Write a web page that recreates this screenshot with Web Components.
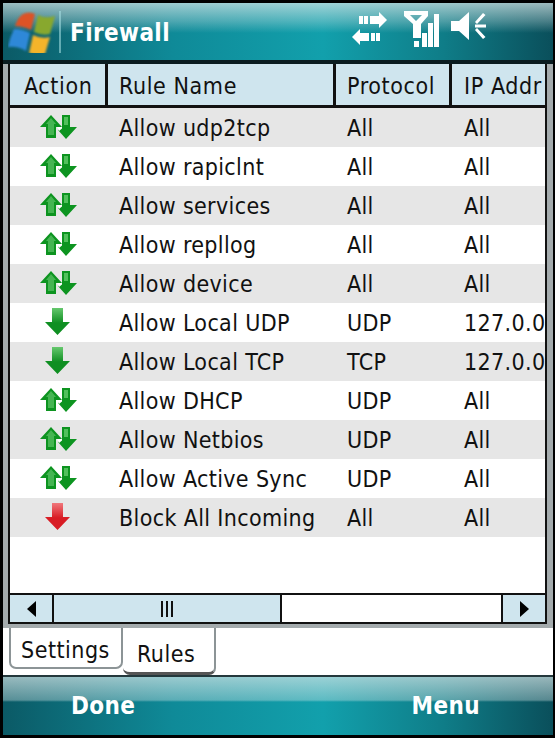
<!DOCTYPE html>
<html>
<head>
<meta charset="utf-8">
<title>Firewall</title>
<style>
  html, body { margin: 0; padding: 0; background: #000; }
  body { width: 555px; height: 738px; overflow: hidden; font-family: "DejaVu Sans Condensed", "DejaVu Sans", sans-serif; }
</style>
</head>
<body>
<fw-screen>
  <fw-titlebar slot="top">Firewall</fw-titlebar>
  <fw-rules></fw-rules>
  <fw-tabs>
    <fw-tab>Settings</fw-tab>
    <fw-tab active>Rules</fw-tab>
  </fw-tabs>
  <fw-softkeys slot="bottom">
    <span slot="left">Done</span>
    <span slot="right">Menu</span>
  </fw-softkeys>
</fw-screen>

<script>
const UI_FONT = '"DejaVu Sans Condensed", "DejaVu Sans", sans-serif';
const RULES = [
  ['both', 'Allow udp2tcp', 'All', 'All'],
  ['both', 'Allow rapiclnt', 'All', 'All'],
  ['both', 'Allow services', 'All', 'All'],
  ['both', 'Allow repllog', 'All', 'All'],
  ['both', 'Allow device', 'All', 'All'],
  ['in', 'Allow Local UDP', 'UDP', '127.0.0.1'],
  ['in', 'Allow Local TCP', 'TCP', '127.0.0.1'],
  ['both', 'Allow DHCP', 'UDP', 'All'],
  ['both', 'Allow Netbios', 'UDP', 'All'],
  ['both', 'Allow Active Sync', 'UDP', 'All'],
  ['block', 'Block All Incoming', 'All', 'All'],
];

class FwScreen extends HTMLElement {
  constructor() {
    super();
    this.attachShadow({ mode: 'open' }).innerHTML = `
<style>
  :host {
    display: flex;
    flex-direction: column;
    box-sizing: border-box;
    width: 555px;
    height: 738px;
    padding: 3px 2px 3px 3px;
    background: #000;
  }
  #middle { flex: 1; display: flex; flex-direction: column; min-height: 0; background: #fff; }
</style>
<slot name="top"></slot>
<div id="middle"><slot></slot></div>
<slot name="bottom"></slot>`;
  }
}
customElements.define('fw-screen', FwScreen);

class FwTitlebar extends HTMLElement {
  constructor() {
    super();
    this.attachShadow({ mode: 'open' }).innerHTML = `
<style>
  :host {
    display: flex;
    flex: none;
    align-items: center;
    box-sizing: border-box;
    height: 61px;
    color: #fff;
    font: bold 24px ${UI_FONT};
    letter-spacing: .4px;
    border-bottom: 4px solid #0a1c20;
    background:
      linear-gradient(180deg, rgba(225,235,235,.68) 0, rgba(225,235,235,.3) 18px, rgba(225,235,235,0) 30px),
      linear-gradient(90deg, #0b5a66 0, #0f8a98 170px, #12a0ac 320px, #0f7d88 440px, #0a4f5b 100%);
  }
  #logo { width: 48px; height: 42px; margin-left: 5px; flex: none; }
  #sep { width: 2px; height: 42px; margin: 0 9px 0 3px; background: rgba(170,225,230,.55); flex: none; }
  #name { flex: 1; padding-top: 2px; }
  #status { display: flex; align-items: flex-start; margin-right: 66px; height: 38px; }
  #status svg { display: block; flex: none; }
</style>
<svg id="logo" viewBox="0 0 48 42">
  <defs><filter id="b"><feGaussianBlur stdDeviation=".8"/></filter></defs>
  <g filter="url(#b)">
    <path d="M7 15Q10 6 15 3Q21 0 27 3L23 19Q15 15 7 15Z" fill="#dc5226"/>
    <path d="M30 4Q37 8 47 5L42 23Q34 25 26 21Z" fill="#88a82e"/>
    <path d="M6 18Q14 18 22 22L18 40Q10 35 0 36Q2 26 6 18Z" fill="#2e88d8"/>
    <path d="M25 24Q33 28 42 26L37 43Q30 46 21 42Z" fill="#f4b42c"/>
  </g>
</svg>
<div id="sep"></div>
<div id="name"><slot></slot></div>
<div id="status">
  <svg width="36" height="33" viewBox="0 0 36 33" fill="#fff" style="margin-top:-1px">
    <path d="M27 0L35 8L27 16V12H18V4H27ZM7 4H11V12H7ZM12 4H16V12H12Z"/>
    <path d="M8 17V21H17V29H8V33L0 25ZM19 21H23V29H19ZM24 21H28V29H24Z"/>
  </svg>
  <svg width="36" height="37" viewBox="0 0 36 37" fill="#fff" style="margin:-2px 0 0 16px">
    <path fill-rule="evenodd" d="M0 0H24V5L17 13V27H9V13L0 5ZM6 4L12 10L18 4Z"/>
    <rect x="10" y="30" width="5" height="6"/>
    <rect x="18" y="22" width="5" height="14"/>
    <rect x="24" y="12" width="5" height="24"/>
    <rect x="30" y="3" width="5" height="33"/>
  </svg>
  <svg width="36" height="29" viewBox="0 0 36 29" fill="#fff" style="margin:-1px 0 0 11px">
    <path d="M0 9H8L18 0V28L8 19H0Z"/>
    <path d="M24 12.5H35V15.5H24ZM24 10L32 1L34.500 3L26 12ZM24 18L26 16L34.500 25L32 27Z"/>
  </svg>
</div>`;
  }
}
customElements.define('fw-titlebar', FwTitlebar);

class FwAction extends HTMLElement {
  static get observedAttributes() { return ['kind']; }
  constructor() {
    super();
    this.attachShadow({ mode: 'open' });
  }
  connectedCallback() { this.render(); }
  attributeChangedCallback() { this.render(); }
  render() {
    const kind = this.getAttribute('kind') || 'both';
    const id = 'g' + kind;
    const top = kind === 'block' ? '#f0787c' : '#66c86e';
    const bottom = kind === 'block' ? '#d81c24' : '#0f8f22';
    const grad = `<defs><linearGradient id="${id}" x1="0" y1="0" x2="0" y2="1">
      <stop offset="0" stop-color="${top}"/><stop offset=".55" stop-color="${bottom}"/></linearGradient></defs>`;
    let body;
    if (kind === 'both') {
      body = `<svg width="37" height="24" viewBox="0 0 37 24">${grad}
  <path d="M11 0L22 12H16V23H6V12H0Z" fill="#0d9420"/>
  <path d="M11 3L16 9H14V20H8V9H6Z" fill="#45b552"/>
  <path d="M22 0H30V12H37L26 24L18 15L20 13H22Z" fill="#0d9420"/>
  <path d="M24 2H28V10H24Z" fill="#52c05c"/>
  <path d="M17 12L22 12V13.500L19 16Z" fill="#fff"/>
</svg>`;
    } else {
      body = `<svg width="25" height="27" viewBox="0 0 25 27">${grad}
  <path d="M7 0H18V14H25L12.500 27L0 14H7Z" fill="url(#${id})"/>
</svg>`;
    }
    const right = kind === 'both' ? 2 : 4;
    this.shadowRoot.innerHTML = `
<style>
  :host { display: flex; justify-content: center; align-items: center; padding: 0 ${right}px 2px 0; box-sizing: border-box; height: 39px; }
  svg { display: block; }
</style>${body}`;
  }
}
customElements.define('fw-action', FwAction);

class FwRules extends HTMLElement {
  constructor() {
    super();
    this.attachShadow({ mode: 'open' }).innerHTML = `
<style>
  :host {
    display: block;
    flex: none;
    box-sizing: border-box;
    height: 564px;
    background: #fff;
    border-style: solid;
    border-color: #a4abad;
    border-width: 0 6px 4px 5px;
    color: #111;
    font: 23px ${UI_FONT};
    letter-spacing: .35px;
  }
  #inner {
    display: flex;
    flex-direction: column;
    height: 100%;
    border: solid #111;
    border-width: 0 2px;
  }
  #grid { flex: 1; overflow: hidden; min-height: 0; }
  .row {
    display: grid;
    grid-template-columns: 98px 228px 116px 93px;
    height: 39px;
    line-height: 40px;
    white-space: nowrap;
    overflow: hidden;
  }
  .row:nth-child(odd) { background: #e6e6e6; }
  .row > div { padding-left: 11px; overflow: hidden; }
  .row > div:last-child { padding-left: 12px; }
  #head {
    display: grid;
    flex: none;
    grid-template-columns: 95px 3px 225px 3px 113px 3px 93px;
    box-sizing: border-box;
    height: 44px;
    line-height: 44px;
    letter-spacing: .6px;
    background: #111;
    border-bottom: 3px solid #111;
    white-space: nowrap;
    overflow: hidden;
  }
  #head span { background: #cfe5ee; padding-left: 11px; overflow: hidden; }
  #head span:first-child { padding-left: 14px; }
  #head span:last-child { padding-left: 12px; }
  #head i { background: #111; }
</style>
<div id="inner">
  <div id="head">
    <span>Action</span><i></i><span>Rule Name</span><i></i><span>Protocol</span><i></i><span>IP Addr</span>
  </div>
  <div id="grid"></div>
  <fw-scrollbar></fw-scrollbar>
</div>`;
    const grid = this.shadowRoot.querySelector('#grid');
    RULES.forEach(r => {
      const row = document.createElement('div');
      row.className = 'row';
      const act = document.createElement('fw-action');
      act.setAttribute('kind', r[0]);
      row.appendChild(act);
      r.slice(1).forEach(text => {
        const cell = document.createElement('div');
        cell.textContent = text;
        row.appendChild(cell);
      });
      grid.appendChild(row);
    });
  }
}
customElements.define('fw-rules', FwRules);

class FwScrollbar extends HTMLElement {
  constructor() {
    super();
    this.attachShadow({ mode: 'open' }).innerHTML = `
<style>
  :host {
    display: flex;
    flex: none;
    box-sizing: border-box;
    height: 31px;
    border: solid #111;
    border-width: 2px 0;
    background: #fff;
  }
  .btn, #thumb { background: #cfe5ee; display: flex; align-items: center; justify-content: center; flex: none; }
  #left { width: 42px; border-right: 2px solid #111; }
  #right { width: 44px; border-left: 2px solid #111; box-sizing: border-box; }
  #thumb { width: 226px; border-right: 2px solid #111; }
  #track { flex: 1; }
  svg { display: block; }
</style>
<div class="btn" id="left"><svg width="9" height="16" viewBox="0 0 9 16"><path d="M9 0V16L0 8Z" fill="#000"/></svg></div>
<div id="thumb"><svg width="12" height="16" viewBox="0 0 12 16" fill="#111"><rect width="2" height="16"/><rect x="5" width="2" height="16"/><rect x="10" width="2" height="16"/></svg></div>
<div id="track"></div>
<div class="btn" id="right"><svg width="9" height="16" viewBox="0 0 9 16"><path d="M0 0V16L9 8Z" fill="#000"/></svg></div>`;
  }
}
customElements.define('fw-scrollbar', FwScrollbar);

class FwTabs extends HTMLElement {
  constructor() {
    super();
    this.attachShadow({ mode: 'open' }).innerHTML = `
<style>
  :host {
    display: flex;
    flex: none;
    align-items: flex-start;
    height: 47px;
    padding-left: 6px;
    background: #fff;
  }
</style>
<slot></slot>`;
  }
}
customElements.define('fw-tabs', FwTabs);

class FwTab extends HTMLElement {
  constructor() {
    super();
    this.attachShadow({ mode: 'open' }).innerHTML = `
<style>
  :host {
    display: block;
    box-sizing: border-box;
    width: 114px;
    height: 41px;
    padding-left: 10px;
    border: 2px solid #8c9496;
    border-top: 0;
    border-radius: 0 0 7px 7px;
    color: #111;
    font: 23px/44px ${UI_FONT};
    letter-spacing: .5px;
    background: #fff;
  }
  :host([active]) {
    width: 93px;
    height: 47px;
    padding: 4px 0 0 14px;
    border-left: 0;
    border-bottom: 3px solid #555;
  }
</style>
<slot></slot>`;
  }
}
customElements.define('fw-tab', FwTab);

class FwSoftkeys extends HTMLElement {
  constructor() {
    super();
    this.attachShadow({ mode: 'open' }).innerHTML = `
<style>
  :host {
    display: flex;
    flex: none;
    justify-content: space-between;
    align-items: center;
    box-sizing: border-box;
    height: 60px;
    padding: 0 73px 0 68px;
    border-top: 2px solid #24383c;
    color: #fff;
    font: bold 24px ${UI_FONT};
    letter-spacing: .4px;
    background:
      linear-gradient(180deg, rgba(225,235,235,.66) 0, rgba(225,235,235,.36) 23px, rgba(225,235,235,0) 25px),
      linear-gradient(90deg, #0b5a66 0, #0f8a98 170px, #12a0ac 320px, #0f7d88 440px, #0a4f5b 100%);
  }
</style>
<slot name="left"></slot>
<slot name="right"></slot>`;
  }
}
customElements.define('fw-softkeys', FwSoftkeys);
</script>
</body>
</html>
